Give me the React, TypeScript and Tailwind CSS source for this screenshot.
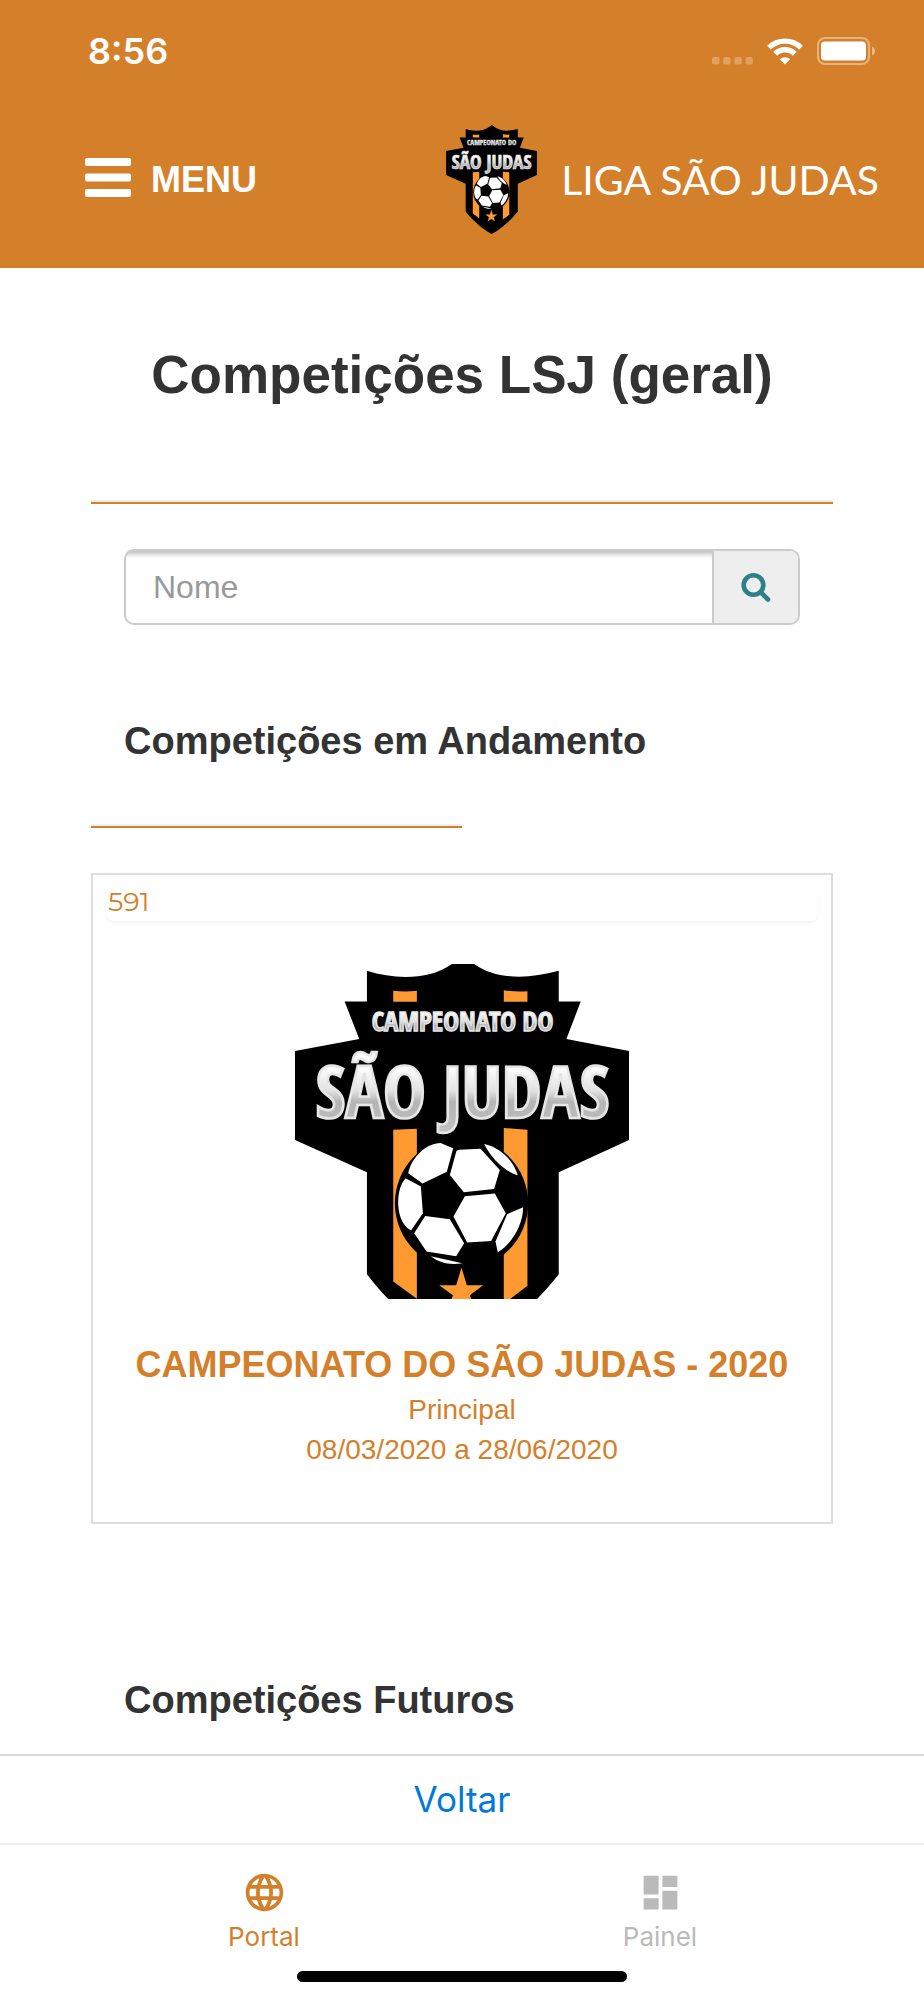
import React, { useId } from "react";
import { MdDashboard, MdLanguage } from "react-icons/md";

function Crest({ viewBox, className }: { viewBox: string; className: string }) {
  const metal = useId();
  return (
    <svg viewBox={viewBox} className={className} role="img" aria-label="Campeonato do São Judas">
      <defs>
        <linearGradient id={metal} x1="0" y1="0" x2="0" y2="1">
          <stop offset="0.25" stopColor="#ffffff" />
          <stop offset="0.5" stopColor="#e2e2e2" />
          <stop offset="0.62" stopColor="#b4b4b4" />
          <stop offset="1" stopColor="#c4c4c4" />
        </linearGradient>
      </defs>
      <path
        d="M291 92C380 120 480 118 545 72L578 47L614 72C680 118 770 118 867 92V184H933L890 297L1078 333V600L867 697V1003C800 1090 690 1190 578 1251C466 1190 356 1090 291 1003V697L75 600V333L268 297L224 184H291Z"
        fill="#000"
      />
      <g fill="#ff9a33">
        <path d="M370 152Q405 156 441 152V185H370Z" />
        <path d="M702 150Q737 156 773 153V185H702Z" />
        <path d="M370 569L441 566V1077L370 1025Z" />
        <path d="M702 564L773 569V1038L702 1092Z" />
      </g>
      <circle cx="575" cy="790" r="200" fill="#000" />
      <g fill="#fff">
        <path d="M415 700C425 650 470 610 512 609L550 625L531 695L458 731Z" />
        <path d="M568 629L632 626L690 690L673 747L582 757L540 705L560 632Z" />
        <path d="M643 612C690 622 730 660 744 706C705 695 665 655 643 612Z" />
        <path d="M407 715L453 740L459 820L424 871C380 855 371 755 407 715Z" />
        <path d="M585 769L675 761L708 820L664 903L592 908L551 830Z" />
        <path d="M466 828L540 838L583 910L559 949L470 935L433 880Z" />
        <path d="M760 802C760 850 730 910 684 937L677 905L712 823Z" />
        <path d="M483 949L578 970C540 976 510 970 483 949Z" />
      </g>
      <path
        d="M575 983L591 1036H640L600 1066L616 1113L575 1084L534 1113L549 1066L508 1036H559Z"
        fill="#ff9a33"
      />
      <g fill={`url(#${metal})`} textAnchor="middle" className="font-[Open_Sans_Condensed,Noto_Sans_ExtraCondensed,Liberation_Sans_Narrow,sans-serif] font-bold">
        <text x="578" y="272" fontSize="80" stroke="#e6e6e6" strokeWidth="4">CAMPEONATO DO</text>
        <text x="578" y="534" fontSize="214" stroke="#e6e6e6" strokeWidth="8">SÃO JUDAS</text>
      </g>
    </svg>
  );
}

function StatusBar() {
  return (
    <div className="flex h-[102px] items-center justify-between pr-12 pl-[88px]">
      <time className="font-[Inter,sans-serif] text-[36px] font-semibold">8:56</time>
      <div className="flex items-center gap-[14px]">
        <svg viewBox="0 0 41 27" className="h-[27px] w-[41px]" fill="#fff" fillOpacity="0.25" aria-hidden="true">
          <rect x="0" y="19" width="7.5" height="7.5" rx="2" />
          <rect x="11.1" y="19" width="7.5" height="7.5" rx="2" />
          <rect x="22.3" y="19" width="7.5" height="7.5" rx="2" />
          <rect x="33.4" y="19" width="7.5" height="7.5" rx="2" />
        </svg>
        <svg viewBox="0 0 36 27" className="h-[27px] w-9" aria-hidden="true">
          <g fill="none" stroke="#fff" strokeWidth="5.4">
            <path d="M2 9.6A23 23 0 0 1 34 9.6" />
            <path d="M8.2 15.8A14 14 0 0 1 27.8 15.8" />
          </g>
          <path d="M12.8 21.2A7.6 7.6 0 0 1 23.2 21.2L18 26.6Z" fill="#fff" />
        </svg>
        <svg viewBox="0 0 59 28" className="h-7 w-[59px]" aria-hidden="true">
          <rect x="1" y="1" width="51" height="26" rx="7" fill="none" stroke="#fff" strokeOpacity="0.4" strokeWidth="2" />
          <rect x="4" y="4.5" width="45" height="19" rx="4" fill="#fff" />
          <path d="M55 9.5Q58 11 58 14T55 18.5Z" fill="#fff" fillOpacity="0.45" />
        </svg>
      </div>
    </div>
  );
}

function Rule({ className }: { className: string }) {
  return <div className={`h-1 border-t-2 border-[#eeeeee] bg-[#d4802b] ${className}`} />;
}

export default function App() {
  return (
    <div className="flex min-h-screen flex-col bg-white font-['Liberation_Sans',Arial,sans-serif] text-[#333333]">
      <header className="bg-[#d4802b] pb-[34px] text-white">
        <StatusBar />
        <div className="flex h-[132px] items-end justify-between pr-[45px] pl-[85px]">
          <button type="button" className="mb-8 flex items-start gap-5 text-[36px] leading-[44px] font-bold">
            <svg viewBox="0 0 46 40" className="h-10 w-[46px]" fill="#fff" aria-hidden="true">
              <rect y="0" width="46" height="8" rx="2" />
              <rect y="15.5" width="46" height="8" rx="2" />
              <rect y="31" width="46" height="8" rx="2" />
            </svg>
            MENU
          </button>
          <a href="#inicio" className="flex items-center gap-6">
            <Crest viewBox="75 47 1003 1204" className="h-[109px] w-[91px]" />
            <span className="font-[Lato,sans-serif] text-[41px] leading-none">LIGA SÃO JUDAS</span>
          </a>
        </div>
      </header>

      <main className="flex-1 px-[91px] pt-[77px]">
        <h1 className="text-center text-[53px] leading-[60px] font-bold">Competições LSJ (geral)</h1>
        <Rule className="mt-[95px]" />

        <form className="mt-[45px] px-[33px]" onSubmit={(e) => e.preventDefault()}>
          <div className="flex h-[76px] overflow-hidden rounded-[10px] border-2 border-[#cccccc]">
            <input
              type="text"
              aria-label="Nome"
              placeholder="Nome"
              className="min-w-0 flex-1 px-[27px] text-[32px] inset-shadow-[0_7px_5px_-4px_#00000044] outline-none placeholder:text-[#999999]"
            />
            <button
              type="submit"
              aria-label="Buscar"
              className="flex w-[86px] items-center justify-center border-l-2 border-[#cccccc] bg-[#eeeeee]"
            >
              <svg viewBox="0 0 30 30" className="size-[30px]" fill="none" stroke="#2d7f8a" strokeWidth="4.6" strokeLinecap="round" aria-hidden="true">
                <circle cx="12.5" cy="13" r="9.8" />
                <path d="M20 20.5L27 27.5" />
              </svg>
            </button>
          </div>
        </form>

        <section>
          <h2 className="mt-[94px] px-[33px] text-[38px] leading-[44px] font-bold">Competições em Andamento</h2>
          <Rule className="mt-[61px] w-1/2" />
          <a
            href="#competicao-591"
            className="mt-[45px] flex flex-col items-center border-2 border-[#dddddd] px-[13px] pt-3 pb-[52px] text-center text-[28px] leading-10 text-[#d4802b]"
          >
            <span className="h-[34px] w-full self-stretch rounded-lg pl-[2px] text-left font-[Montserrat,Lato,sans-serif] text-[27px] leading-[30px] shadow-[0_2px_3px_#0000000c]">
              591
            </span>
            <Crest viewBox="75 72 1003 1005" className="mt-[43px] h-[335px] w-[334px]" />
            <strong className="mt-[42px] mb-px text-[36px] leading-[48px]">CAMPEONATO DO SÃO JUDAS - 2020</strong>
            <span>Principal</span>
            <span>08/03/2020 a 28/06/2020</span>
          </a>
        </section>

        <section>
          <h2 className="mt-[154px] px-[33px] text-[38px] leading-[44px] font-bold">Competições Futuros</h2>
        </section>
      </main>

      <footer className="sticky bottom-0 border-t-2 border-[#d9d9d9] bg-white pb-[18px] font-[Inter,sans-serif]">
        <button type="button" className="block h-[87px] w-full text-[35px] text-[#0078dc]">
          Voltar
        </button>
        <nav className="flex border-t-2 border-[#eeeeee] px-[66px] pt-[25px] text-[26px] leading-8">
          <a href="#portal" className="flex flex-1 flex-col items-center gap-[6px] text-[#d4802b]">
            <MdLanguage size={45} />
            Portal
          </a>
          <a href="#painel" className="flex flex-1 flex-col items-center gap-[6px] text-[#bababa]">
            <MdDashboard size={45} />
            Painel
          </a>
        </nav>
        <div className="mx-auto mt-[18px] h-[11px] w-[330px] rounded-full bg-black" />
      </footer>
    </div>
  );
}
